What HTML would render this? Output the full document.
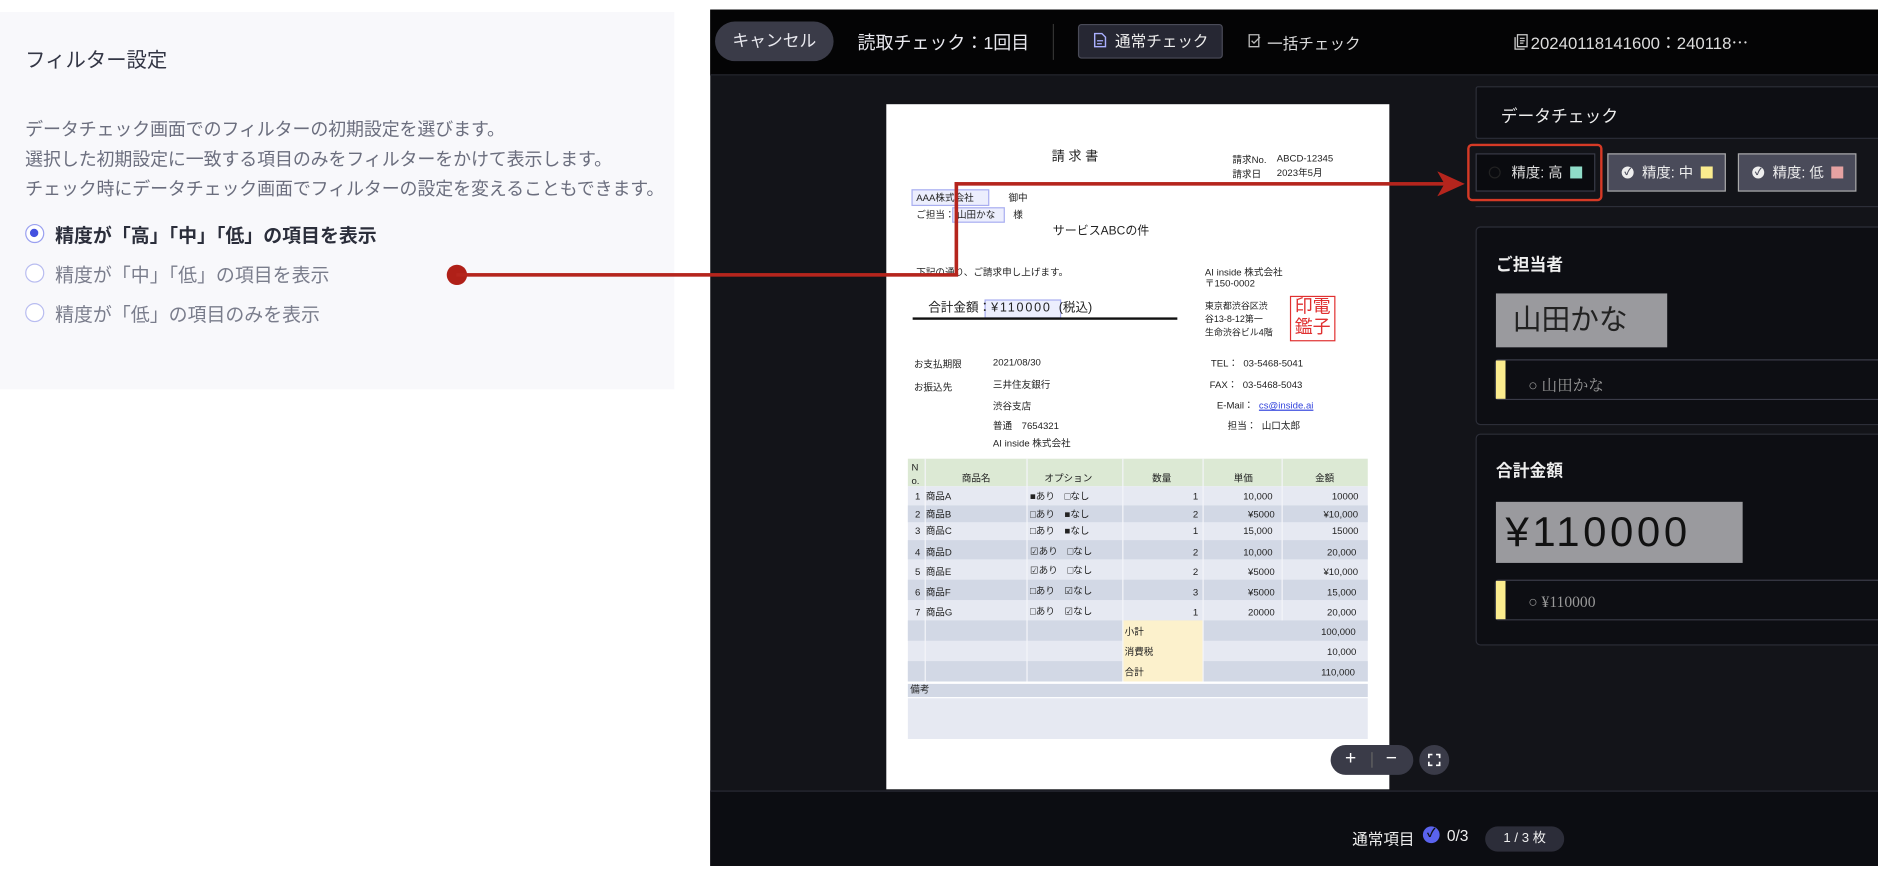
<!DOCTYPE html>
<html><head><meta charset="utf-8">
<style>
*{margin:0;padding:0;box-sizing:border-box}
html,body{width:1878px;height:872px;overflow:hidden;background:#fff}
body{font-family:"Liberation Sans","Noto Sans CJK JP",sans-serif}
#w{position:absolute;left:0;top:0;width:1568px;height:728px;transform:scale(1.19770);transform-origin:0 0}
.a{position:absolute;white-space:nowrap}
.lp{left:0;top:10px;width:563px;height:315px;background:#f8f8fb}
.rad{width:16px;height:16px;border:1.5px solid #b8bcf0;border-radius:50%;background:#fff}
.dk{left:593px;top:8px;width:975px;height:715px;background:#131419}
.doc{left:740px;top:87px;width:420px;height:572px;background:#fff}
.d{position:absolute;white-space:nowrap;font-size:8px;color:#222;line-height:1}
.bx{position:absolute;border:1.5px solid #a9aef0;background:rgba(200,205,250,.35)}
.cell{position:absolute;font-size:8px;color:#222;line-height:1}
.card{position:absolute;border:1px solid #2c2e38;border-radius:4px;background:#0d0e13}
</style></head><body><div id="w">

<!-- left panel -->
<div class="a lp"></div>
<div class="a" style="left:21px;top:36px;font-size:17px;color:#333645">フィルター設定</div>
<div class="a" style="left:21px;top:96px;font-size:15px;line-height:25px;color:#6b6e7e;letter-spacing:-0.1px">データチェック画面でのフィルターの初期設定を選びます。<br>選択した初期設定に一致する項目のみをフィルターをかけて表示します。<br>チェック時にデータチェック画面でフィルターの設定を変えることもできます。</div>
<div class="a rad" style="left:21px;top:187px;border-color:#9aa0f0"><div style="position:absolute;left:3px;top:3px;width:7px;height:7px;border-radius:50%;background:#4451e0"></div></div>
<div class="a" style="left:46px;top:184px;font-size:15.8px;color:#2b2e3b;font-weight:bold">精度が「高」「中」「低」の項目を表示</div>
<div class="a rad" style="left:21px;top:220px"></div>
<div class="a" style="left:46px;top:217px;font-size:15.8px;color:#7a7d8c">精度が「中」「低」の項目を表示</div>
<div class="a rad" style="left:21px;top:253px"></div>
<div class="a" style="left:46px;top:250px;font-size:15.8px;color:#7a7d8c">精度が「低」の項目のみを表示</div>

<!-- dark app -->
<div class="a dk"></div>
<div class="a" style="left:593px;top:8px;width:975px;height:55px;background:#040405;border-bottom:1px solid #262730"></div>
<div class="a" style="left:597px;top:18px;width:99px;height:33px;border-radius:17px;background:#3a3b48;color:#e8e8ee;font-size:14px;line-height:33px;text-align:center">キャンセル</div>
<div class="a" style="left:716px;top:25px;font-size:15px;color:#e8e8ee">読取チェック：1回目</div>
<div class="a" style="left:879px;top:20px;width:1px;height:30px;background:#333"></div>
<div class="a" style="left:900px;top:20px;width:121px;height:29px;background:#262733;border:1px solid #4a4b58;border-radius:3px;color:#eee;font-size:13px;line-height:27px;padding-left:30px">通常チェック</div>
<svg class="a" style="left:913px;top:27px" width="11" height="13" viewBox="0 0 11 13"><path d="M1 1h6l3 3v8H1z" fill="none" stroke="#aab0ff" stroke-width="1.2"/><path d="M3 7h5M3 9.5h4" stroke="#aab0ff"/></svg>
<svg class="a" style="left:1042px;top:28px" width="12" height="12" viewBox="0 0 12 12"><path d="M1 1h8v10H1z" fill="none" stroke="#bbb" stroke-width="1.1"/><path d="M3 6l2 2 5-5" fill="none" stroke="#bbb" stroke-width="1.1"/></svg>
<div class="a" style="left:1058px;top:26px;font-size:13px;color:#ddd">一括チェック</div>
<svg class="a" style="left:1264px;top:28px" width="12" height="14" viewBox="0 0 12 14"><path d="M3 1h8v10H3z M1 3v10h8" fill="none" stroke="#ccc" stroke-width="1.1"/><path d="M5 4h4M5 6h4M5 8h3" stroke="#ccc"/></svg>
<div class="a" style="left:1278px;top:26px;font-size:14px;color:#ddd">20240118141600：240118⋯</div>

<!-- document -->
<div class="a doc">
 <div class="d" style="left:138px;top:39px;font-size:11px;letter-spacing:3px">請求書</div>
 <div class="d" style="left:289px;top:43px">請求No.</div><div class="d" style="left:326px;top:42px">ABCD-12345</div>
 <div class="d" style="left:289px;top:55px">請求日</div><div class="d" style="left:326px;top:54px">2023年5月</div>
 <div class="bx" style="left:21px;top:71px;width:65px;height:14px"></div>
 <div class="d" style="left:25px;top:75px">AAA株式会社</div><div class="d" style="left:102px;top:75px">御中</div>
 <div class="bx" style="left:55px;top:86px;width:44px;height:13px"></div>
 <div class="d" style="left:25px;top:89px">ご担当：</div><div class="d" style="left:59px;top:89px">山田かな</div><div class="d" style="left:106px;top:89px">様</div>
 <div class="d" style="left:139px;top:102px;font-size:10px">サービスABCの件</div>
 <div class="d" style="left:25px;top:137px">下記の通り、ご請求申し上げます。</div>
 <div class="bx" style="left:82px;top:163px;width:64px;height:16px"></div>
 <div class="d" style="left:35px;top:165px;font-size:10.5px">合計金額：<span style="letter-spacing:1.5px">¥110000</span>&nbsp;&nbsp;(税込)</div>
 <div style="position:absolute;left:22px;top:178px;width:221px;height:1.5px;background:#111"></div>
 <div class="d" style="left:266px;top:137px">AI inside 株式会社</div>
 <div class="d" style="left:266px;top:146px">〒150-0002</div>
 <div class="d" style="left:266px;top:163px;line-height:11px;font-size:7.5px">東京都渋谷区渋<br>谷13-8-12第一<br>生命渋谷ビル4階</div>
 <div style="position:absolute;left:337px;top:160px;width:38px;height:38px;border:1px solid #e03030;color:#e03030;font-size:15px;line-height:17px;text-align:center">印電<br>鑑子</div>
 <div class="d" style="left:23px;top:214px">お支払期限</div><div class="d" style="left:89px;top:212px">2021/08/30</div>
 <div class="d" style="left:23px;top:233px">お振込先</div><div class="d" style="left:89px;top:231px">三井住友銀行</div>
 <div class="d" style="left:89px;top:249px">渋谷支店</div>
 <div class="d" style="left:89px;top:265px">普通　7654321</div>
 <div class="d" style="left:89px;top:280px">AI inside 株式会社</div>
 <div class="d" style="left:271px;top:213px">TEL：&nbsp; 03-5468-5041</div>
 <div class="d" style="left:270px;top:231px">FAX：&nbsp; 03-5468-5043</div>
 <div class="d" style="left:276px;top:248px">E-Mail：&nbsp; <span style="color:#3344dd;text-decoration:underline">cs@inside.ai</span></div>
 <div class="d" style="left:285px;top:265px">担当：&nbsp; 山口太郎</div>
</div>

<!-- table -->
<div class="a" style="left:758px;top:383px;width:384px;height:23px;background:#dce9d4"></div>
<div class="a" style="left:758px;top:406px;width:384px;height:163px;background:#e6e9f2"></div>
<div class="a" style="left:758px;top:422px;width:384px;height:14px;background:#d2d8e5"></div>
<div class="a" style="left:758px;top:451px;width:384px;height:16px;background:#d2d8e5"></div>
<div class="a" style="left:758px;top:484px;width:384px;height:17px;background:#d2d8e5"></div>
<div class="a" style="left:758px;top:518px;width:384px;height:17px;background:#d2d8e5"></div>
<div class="a" style="left:758px;top:552px;width:384px;height:17px;background:#d2d8e5"></div>
<div class="a" style="left:937px;top:518px;width:67px;height:51px;background:#fcf1cc"></div>
<div class="a" style="left:758px;top:571px;width:384px;height:11px;background:#d2d8e5"></div>
<div class="a" style="left:758px;top:583px;width:384px;height:34px;background:#e6e9f2"></div>
<div class="a" style="left:772px;top:383px;width:1px;height:186px;background:#f4f5f9"></div>
<div class="a" style="left:857px;top:383px;width:1px;height:186px;background:#f4f5f9"></div>
<div class="a" style="left:937px;top:383px;width:1px;height:186px;background:#f4f5f9"></div>
<div class="a" style="left:1004px;top:383px;width:1px;height:186px;background:#f4f5f9"></div>
<div class="a" style="left:1070px;top:383px;width:1px;height:135px;background:#f4f5f9"></div>
<div class="cell" style="left:761px;top:385px;line-height:11px">N<br>o.</div>
<div class="cell" style="left:803px;top:396px">商品名</div>
<div class="cell" style="left:872px;top:396px">オプション</div>
<div class="cell" style="left:962px;top:396px">数量</div>
<div class="cell" style="left:1030px;top:396px">単価</div>
<div class="cell" style="left:1098px;top:396px">金額</div>
<div class="cell" style="left:764px;top:411px;line-height:1">1&nbsp;&nbsp;商品A</div><div class="cell" style="left:860px;top:411px">■あり　□なし</div><div class="cell" style="left:996px;top:411px">1</div><div class="cell" style="left:1038px;top:411px">10,000</div><div class="cell" style="left:1112px;top:411px">10000</div>
<div class="cell" style="left:764px;top:426px">2&nbsp;&nbsp;商品B</div><div class="cell" style="left:860px;top:426px">□あり　■なし</div><div class="cell" style="left:996px;top:426px">2</div><div class="cell" style="left:1042px;top:426px">¥5000</div><div class="cell" style="left:1105px;top:426px">¥10,000</div>
<div class="cell" style="left:764px;top:440px">3&nbsp;&nbsp;商品C</div><div class="cell" style="left:860px;top:440px">□あり　■なし</div><div class="cell" style="left:996px;top:440px">1</div><div class="cell" style="left:1038px;top:440px">15,000</div><div class="cell" style="left:1112px;top:440px">15000</div>
<div class="cell" style="left:764px;top:458px">4&nbsp;&nbsp;商品D</div><div class="cell" style="left:860px;top:457px">☑あり　□なし</div><div class="cell" style="left:996px;top:458px">2</div><div class="cell" style="left:1038px;top:458px">10,000</div><div class="cell" style="left:1108px;top:458px">20,000</div>
<div class="cell" style="left:764px;top:474px">5&nbsp;&nbsp;商品E</div><div class="cell" style="left:860px;top:473px">☑あり　□なし</div><div class="cell" style="left:996px;top:474px">2</div><div class="cell" style="left:1042px;top:474px">¥5000</div><div class="cell" style="left:1105px;top:474px">¥10,000</div>
<div class="cell" style="left:764px;top:491px">6&nbsp;&nbsp;商品F</div><div class="cell" style="left:860px;top:490px">□あり　☑なし</div><div class="cell" style="left:996px;top:491px">3</div><div class="cell" style="left:1042px;top:491px">¥5000</div><div class="cell" style="left:1108px;top:491px">15,000</div>
<div class="cell" style="left:764px;top:508px">7&nbsp;&nbsp;商品G</div><div class="cell" style="left:860px;top:507px">□あり　☑なし</div><div class="cell" style="left:996px;top:508px">1</div><div class="cell" style="left:1042px;top:508px">20000</div><div class="cell" style="left:1108px;top:508px">20,000</div>
<div class="cell" style="left:939px;top:524px">小計</div><div class="cell" style="left:1103px;top:524px">100,000</div>
<div class="cell" style="left:939px;top:541px">消費税</div><div class="cell" style="left:1108px;top:541px">10,000</div>
<div class="cell" style="left:939px;top:558px">合計</div><div class="cell" style="left:1103px;top:558px">110,000</div>
<div class="cell" style="left:760px;top:572px">備考</div>

<!-- zoom controls -->
<div class="a" style="left:1111px;top:622px;width:69px;height:25px;border-radius:13px;background:#3a3b48;color:#fff;font-size:16px;line-height:24px"><span style="position:absolute;left:12px">+</span><span style="position:absolute;left:34px;top:6px;width:1px;height:13px;background:#666"></span><span style="position:absolute;left:46px">−</span></div>
<div class="a" style="left:1185px;top:622px;width:25px;height:25px;border-radius:50%;background:#3a3b48"><svg style="position:absolute;left:7px;top:7px" width="11" height="11" viewBox="0 0 11 11"><path d="M1 4V1h3M7 1h3v3M10 7v3H7M4 10H1V7" fill="none" stroke="#fff" stroke-width="1.4"/></svg></div>

<!-- right panel -->
<div class="card" style="left:1232px;top:72px;width:340px;height:44px;border-radius:2px"></div>
<div class="a" style="left:1253px;top:87px;font-size:14px;color:#eee">データチェック</div>
<div class="a" style="left:1232px;top:128px;width:100px;height:32px;background:#0a0b0f;border:1px solid #3a3b48;color:#ddd;font-size:12px;line-height:30px;padding-left:29px">精度: 高 <span style="display:inline-block;width:10px;height:10px;background:#8fdcc8;vertical-align:-1px;margin-left:3px"></span></div>
<div class="a" style="left:1243px;top:139px;width:10px;height:10px;border-radius:50%;border:1px solid #222"></div>
<div class="a" style="left:1342px;top:128px;width:99px;height:32px;background:#4a4b5a;border:1px solid #aaa;color:#eee;font-size:12px;line-height:30px;padding-left:28px">精度: 中 <span style="display:inline-block;width:10px;height:10px;background:#fbec8e;vertical-align:-1px;margin-left:3px"></span></div>
<div class="a" style="left:1354px;top:139px;width:10px;height:10px;border-radius:50%;background:#eee;color:#4a4b5a;font-size:8px;line-height:10px;text-align:center;font-weight:bold">✓</div>
<div class="a" style="left:1451px;top:128px;width:99px;height:32px;background:#4a4b5a;border:1px solid #aaa;color:#eee;font-size:12px;line-height:30px;padding-left:28px">精度: 低 <span style="display:inline-block;width:10px;height:10px;background:#e6a2a2;vertical-align:-1px;margin-left:3px"></span></div>
<div class="a" style="left:1463px;top:139px;width:10px;height:10px;border-radius:50%;background:#eee;color:#4a4b5a;font-size:8px;line-height:10px;text-align:center;font-weight:bold">✓</div>
<div class="a" style="left:1232px;top:172px;width:336px;height:1px;background:#2c2e38"></div>
<div class="a" style="left:1225px;top:120px;width:113px;height:48px;border:2px solid #d63a26;border-radius:4px"></div>

<div class="card" style="left:1232px;top:189px;width:340px;height:166px"></div>
<div class="a" style="left:1249px;top:211px;font-size:14px;color:#eee;font-weight:bold">ご担当者</div>
<div class="a" style="left:1249px;top:245px;width:143px;height:45px;background:#9a9a9e;color:#222;font-size:24px;line-height:45px;padding-left:14px">山田かな</div>
<div class="a" style="left:1248px;top:300px;width:330px;height:34px;border:1px solid #3a3b48;border-radius:3px"></div>
<div class="a" style="left:1249px;top:301px;width:8px;height:32px;background:#fbec8e"></div>
<div class="a" style="left:1276px;top:311px;font-size:13px;color:#999;font-family:'Liberation Serif','Noto Serif CJK SC',serif">○ 山田かな</div>

<div class="card" style="left:1232px;top:362px;width:340px;height:177px"></div>
<div class="a" style="left:1249px;top:383px;font-size:14px;color:#eee;font-weight:bold">合計金額</div>
<div class="a" style="left:1249px;top:419px;width:206px;height:51px;background:#9a9a9e;color:#111;font-size:35px;line-height:51px;padding-left:8px;letter-spacing:3px">¥110000</div>
<div class="a" style="left:1248px;top:484px;width:330px;height:34px;border:1px solid #3a3b48;border-radius:3px"></div>
<div class="a" style="left:1249px;top:485px;width:8px;height:32px;background:#fbec8e"></div>
<div class="a" style="left:1276px;top:495px;font-size:13px;color:#999;font-family:'Liberation Serif','Noto Serif CJK SC',serif">○ ¥110000</div>

<!-- bottom bar -->
<div class="a" style="left:593px;top:660px;width:975px;height:63px;background:#0c0d12;border-top:1px solid #2a2b35"></div>
<div class="a" style="left:1129px;top:690px;font-size:13px;color:#eee">通常項目</div>
<div class="a" style="left:1188px;top:690px;width:14px;height:14px;border-radius:50%;background:#5a63ee;color:#111;font-size:10px;line-height:14px;text-align:center;font-weight:bold">✓</div>
<div class="a" style="left:1208px;top:690px;font-size:13px;color:#eee">0/3</div>
<div class="a" style="left:1240px;top:690px;width:66px;height:21px;border-radius:11px;background:#2c2d39;color:#eee;font-size:11px;line-height:21px;text-align:center">1 / 3 枚</div>

<!-- red connector -->
<div class="a" style="left:373px;top:221px;width:17px;height:17px;border-radius:50%;background:#b02018"></div>
<div class="a" style="left:381px;top:227.5px;width:419px;height:3px;background:#b5251d"></div>
<div class="a" style="left:797px;top:152px;width:3px;height:78px;background:#b5251d"></div>
<div class="a" style="left:797px;top:152px;width:410px;height:3px;background:#b5251d"></div>
<svg class="a" style="left:1200px;top:143px" width="24" height="21" viewBox="0 0 24 21"><path d="M0 0L23 10.5L0 21L6 10.5z" fill="#b5251d"/></svg>
</div></body></html>
